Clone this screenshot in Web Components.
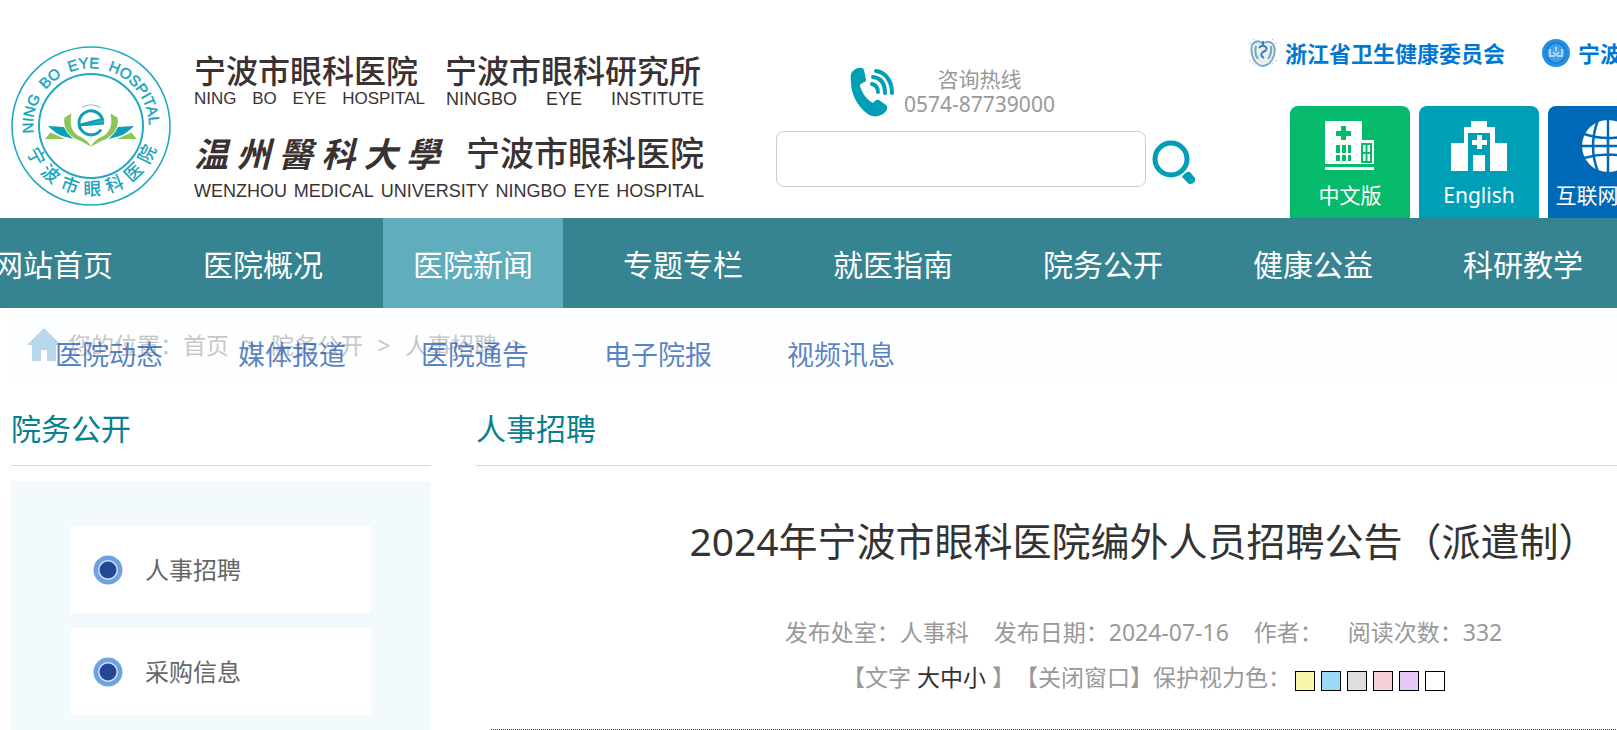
<!DOCTYPE html>
<html lang="zh-CN">
<head>
<meta charset="utf-8">
<title>宁波市眼科医院</title>
<style>
    html {
        overflow-x: hidden;
    }
    body {
        margin: 0;
        background: #fff;
        color: #333;
        font-family: "Noto Sans", "Noto Sans CJK SC", sans-serif;
        font-size: 23px;
        text-spacing-trim: space-all;
        overflow-x: hidden;
    }
    .top {
        display: flex;
        align-items: flex-start;
        min-width: 1800px;
        padding-left: 11px;
    }
    .wrap {
        min-width: 1800px;
        margin-left: 11px;
    }
    .columns {
        display: grid;
        grid-template-columns: 420px 1335px;
        column-gap: 45px;
        margin-top: 10px;
    }
</style>
</head>
<body>
    <header class="top">
        <site-brand></site-brand>
        <site-search></site-search>
        <site-links></site-links>
    </header>
    <site-nav active="2"></site-nav>
    <div class="wrap">
        <bread-crumb></bread-crumb>
        <div class="columns">
            <side-menu>
                <section-title slot="title">院务公开</section-title>
                <menu-item>人事招聘</menu-item>
                <menu-item>采购信息</menu-item>
            </side-menu>
            <main>
                <section-title>人事招聘</section-title>
                <news-article>
                    <span slot="title">2024年宁波市眼科医院编外人员招聘公告（派遣制）</span>
                </news-article>
            </main>
        </div>
    </div>

<script>
function define(name, html, setup) {
    var template = document.createElement('template');
    template.innerHTML = html;
    customElements.define(name, class extends HTMLElement {
        constructor() {
            super();
            this.attachShadow({mode: 'open'}).appendChild(template.content.cloneNode(true));
        }
        connectedCallback() {
            if (setup) {
                setup(this, this.shadowRoot);
            }
        }
    });
}

define('site-brand', `
    <style>
        :host {
            display: flex;
            flex: none;
            width: 693px;
            padding-top: 46px;
            color: #3a3232;
        }
        svg {
            flex: none;
            width: 160px;
            height: 160px;
            margin-right: 23px;
        }
        .names {
            flex: 1;
            padding-top: 7px;
        }
        .row {
            display: flex;
            justify-content: space-between;
            font-size: 32px;
            font-weight: 500;
            line-height: 36px;
            white-space: nowrap;
        }
        .first {
            justify-content: flex-start;
            gap: 27px;
        }
        .latin {
            font-family: "Liberation Sans", Arial, sans-serif;
            font-size: 17px;
            font-weight: 400;
            line-height: 20px;
        }
        .latin div {
            display: flex;
            justify-content: space-between;
        }
        .hospital {
            width: 231px;
        }
        .institute {
            width: 258px;
            font-size: 18px;
        }
        .second {
            margin-top: 24px;
            line-height: 40px;
        }
        .brush {
            display: flex;
            justify-content: space-between;
            width: 246px;
            font-family: "Noto Sans CJK TC", sans-serif;
            font-size: 34px;
            font-style: italic;
            font-weight: 700;
        }
        .wide {
            font-size: 34px;
        }
        .wenzhou {
            margin-top: 8px;
            font-size: 18px;
        }
    </style>
    <svg viewBox="0 0 160 160" role="img" aria-label="宁波市眼科医院">
        <defs>
            <path id="high" d="M22.4 87.1A58 58 0 1 1 137.1 90.1"/>
            <path id="low" d="M13.3 97.9A69 69 0 0 0 146.7 97.9"/>
        </defs>
        <g fill="none" stroke="#22a9c0">
            <circle cx="80" cy="80" r="79" stroke-width="1.6"/>
            <circle cx="80" cy="80" r="52" stroke-width="2"/>
        </g>
        <g fill="#1ba5bd" stroke="#1ba5bd" stroke-width=".5" font-family="Liberation Sans, Arial, sans-serif" font-size="15">
            <text><textPath href="#high" startOffset="0">NING</textPath></text>
            <text><textPath href="#high" startOffset="46">BO</textPath></text>
            <text><textPath href="#high" startOffset="76">EYE</textPath></text>
            <text><textPath href="#high" startOffset="115">HOSPITAL</textPath></text>
        </g>
        <g fill="#1ba5bd" font-family="Noto Sans CJK SC, sans-serif" font-size="18" font-weight="500" text-anchor="middle" id="seal"></g>
        <g id="leaf">
            <path fill="#8dc656" d="M53.5 71.6L60.5 67.6C58.5 78 60 84 66 89C73 92 78 96 80 100.5C74 98 71 95 65 93C56 88 52 81 53.5 71.6zM34 93L39.5 86.5L54 93z"/>
            <path fill="#0e9fb6" d="M37 80L53 81C56 87 58 89 62.5 93L55 91C49 90 43 86 37 80z"/>
        </g>
        <use href="#leaf" transform="matrix(-1 0 0 1 160 0)"/>
        <circle cx="80" cy="76.5" r="14.5" fill="#fff"/>
        <path fill="none" stroke="#0e9fb6" stroke-width="3" d="M67.5 79.5L91.5 73.5A12 12 0 1 0 90 83.5"/>
        <path fill="#0e9fb6" d="M68 80L93 75L93 78.5L76 80z"/>
        <path fill="none" stroke="#7ccbd8" stroke-width="1.2" d="M71 61.5Q80 56 89 61.5"/>
    </svg>
    <div class="names">
        <div class="row first"><span>宁波市眼科医院</span><span>宁波市眼科研究所</span></div>
        <div class="row latin">
            <div class="hospital"><span>NING</span><span>BO</span><span>EYE</span><span>HOSPITAL</span></div>
            <div class="institute"><span>NINGBO</span><span>EYE</span><span>INSTITUTE</span></div>
        </div>
        <div class="row second">
            <div class="brush"><span>温</span><span>州</span><span>醫</span><span>科</span><span>大</span><span>學</span></div>
            <span class="wide">宁波市眼科医院</span>
        </div>
        <div class="row latin wenzhou"><span>WENZHOU</span><span>MEDICAL</span><span>UNIVERSITY</span><span>NINGBO</span><span>EYE</span><span>HOSPITAL</span></div>
    </div>
`, function(host, sroot) {
    // lower half of the seal, one character every 25 units along the arc
    sroot.querySelector('#seal').innerHTML = '宁波市眼科医院'.split('').map(function(c, i) {
        return '<text><textPath href="#low" startOffset="' + (17 + i * 25) + '">' + c + '</textPath></text>';
    }).join('');
});

define('site-search', `
    <style>
        :host {
            display: block;
            flex: none;
            width: 422px;
            margin: 67px 50px 0 72px;
        }
        .hotline {
            display: flex;
            gap: 10px;
            height: 64px;
            padding-left: 74px;
            color: #999;
        }
        .hotline svg {
            width: 44px;
            height: 50px;
        }
        .hotline p {
            margin: 0;
            font-size: 21px;
            line-height: 25px;
            text-align: center;
        }
        .hotline span {
            display: block;
        }
        form {
            display: flex;
            align-items: center;
            gap: 5px;
        }
        input {
            box-sizing: border-box;
            width: 370px;
            height: 56px;
            padding: 0 12px;
            border: 1px solid #ccc;
            border-radius: 8px;
            background: #fff;
            font: inherit;
            outline: 0;
        }
        button {
            padding: 6px 0 0;
            border: 0;
            background: none;
            cursor: pointer;
        }
        button svg {
            display: block;
        }
    </style>
    <div class="hotline">
        <svg viewBox="0 0 44 50" fill="none" stroke="#009fb6" stroke-width="4" stroke-linecap="round">
            <path fill="#009fb6" stroke="none" d="M4 3C8 0 13 0 14 3L16 13C16 16 9 16 10 19C12 26 17 33 23 36C25 34 26 32 29 33L36 38C39 41 36 45 33 47C26 51 20 50 14 44C7 37 1 27 1 15C0 9 1 5 4 3z"/>
            <path d="M22 17C26 18 28 20 28 25M23 10C31 11 35 17 35 26M26 4C36 5 42 15 42 26"/>
        </svg>
        <p><span>咨询热线</span>0574-87739000</p>
    </div>
    <form>
        <input type="text" aria-label="搜索">
        <button type="button" aria-label="搜索">
            <svg width="46" height="46" viewBox="0 0 46 46">
                <circle cx="20" cy="20" r="16" fill="none" stroke="#009fb6" stroke-width="5"/>
                <path fill="#009fb6" d="M31 38Q35 32 39 33L44 39Q45 45 38 45z"/>
            </svg>
        </button>
    </form>
`);

define('site-links', `
    <style>
        :host {
            display: block;
            flex: none;
            padding-top: 38px;
        }
        .gov {
            display: flex;
            gap: 36px;
            height: 68px;
        }
        .gov a {
            display: flex;
            gap: 7px;
            height: 30px;
            color: #0078d2;
            font-size: 22px;
            font-weight: 700;
            line-height: 30px;
            text-decoration: none;
            white-space: nowrap;
        }
        .tiles {
            display: flex;
            gap: 9px;
            padding-left: 42px;
        }
        .tiles a {
            display: flex;
            flex-direction: column;
            align-items: center;
            width: 120px;
            height: 112px;
            border-radius: 8px 8px 0 0;
            color: #fff;
            font-size: 21px;
            line-height: 30px;
            text-decoration: none;
            white-space: nowrap;
        }
        .tiles svg {
            width: 60px;
            height: 60px;
            margin-top: 14px;
        }
        .cn { background: #06ba6c; }
        .en { background: #009fb8; }
        .net { background: #0069b7; }
    </style>
    <div class="gov">
        <a href="#">
            <svg width="30" height="30" viewBox="0 0 30 30" fill="none">
                <g stroke="#9db9dc" stroke-dasharray="2 3"><path d="M1 6L6 1M29 6L24 1M1 22L8 28M29 22L22 28"/></g>
                <path fill="#e4f0f4" stroke="#7fa9cc" stroke-width="2" d="M14 5Q8 1 4 7Q2 14 6 22Q10 28 15 28Q21 27 24 22Q29 13 25 6Q20 2 16 5z"/>
                <path stroke="#70aaa9" stroke-width="2" d="M8 8Q6 16 10 21M23 8Q24 16 20 21"/>
                <path stroke="#3f7db8" stroke-width="2" d="M15 3V8M11 10Q14 6 18 9Q20 12 15 14Q11 17 16 20"/>
            </svg>
            浙江省卫生健康委员会
        </a>
        <a href="#">
            <svg width="30" height="30" viewBox="0 0 30 30" fill="none">
                <circle cx="15" cy="15" r="14" fill="#2490e6"/>
                <circle cx="15" cy="15" r="10" fill="#439ee7" stroke="#1781d6" stroke-width="2"/>
                <path stroke="#a9d6fa" stroke-width="2" d="M9 11V18H14M15 9V13M21 11V18H16M12 14L15 17L18 14"/>
            </svg>
            宁波
        </a>
    </div>
    <div class="tiles">
        <a class="cn" href="#">
            <svg viewBox="0 0 60 60">
                <path fill="#fff" d="M5 1H42V20H54V44H5zM5 47H54V50H5z"/>
                <path fill="#06ba6c" d="M21 6H26V11H31V16H26V20H21V16H16V11H21zM16 25H20V33H16zM22 25H26V33H22zM28 25H31V33H28zM16 35H20V41H16zM22 35H26V41H22zM28 35H31V41H28z"/>
                <path fill="none" stroke="#06ba6c" stroke-width="2" d="M42 24H51V42H42zM46.5 24V42M42 33H51"/>
            </svg>
            中文版
        </a>
        <a class="en" href="#">
            <svg viewBox="0 0 60 60">
                <path fill="#fff" d="M2 23H15V7H22V1H38V7H46V23H58V51H41V13H19V51H2zM24 35H36V51H24zM28 15H33V20H38V25H33V29H28V25H23V20H28z"/>
            </svg>
            English
        </a>
        <a class="net" href="#">
            <svg viewBox="0 0 60 60">
                <circle cx="30" cy="26" r="26" fill="#fff"/>
                <path fill="none" stroke="#0069b7" stroke-width="2.5" d="M30 0V52M6 14Q30 22 54 14M4 26H56M6 38Q30 31 54 38M20 0Q10 26 20 52M40 0Q50 26 40 52"/>
            </svg>
            互联网医院
        </a>
    </div>
`);

define('site-nav', `
    <style>
        :host {
            display: block;
            position: relative;
            z-index: 1;
            background: #368391;
        }
        .main {
            display: flex;
            gap: 30px;
            margin-left: -37px;
        }
        .main a {
            flex: none;
            width: 180px;
            padding-top: 4px;
            color: #fff;
            font-size: 30px;
            line-height: 86px;
            text-align: center;
            text-decoration: none;
        }
        .main a.active {
            background: #60adbd;
        }
        /* the open submenu hangs over the breadcrumb */
        .sub {
            position: absolute;
            top: 100%;
            left: 0;
            right: 0;
            display: flex;
            gap: 75px;
            padding-left: 55px;
            background: rgba(255, 255, 255, .5);
        }
        .sub a {
            color: rgba(16, 76, 170, .7);
            font-size: 27px;
            line-height: 94px;
            text-decoration: none;
            white-space: nowrap;
        }
    </style>
    <nav class="main"></nav>
    <div class="sub">
        <a href="#">医院动态</a>
        <a href="#">媒体报道</a>
        <a href="#">医院通告</a>
        <a href="#">电子院报</a>
        <a href="#">视频讯息</a>
    </div>
`, function(host, sroot) {
    var items = ['网站首页', '医院概况', '医院新闻', '专题专栏', '就医指南', '院务公开', '健康公益', '科研教学'];
    var active = Number(host.getAttribute('active'));
    sroot.querySelector('.main').innerHTML = items.map(function(text, i) {
        return '<a href="#"' + (i === active ? ' class="active"' : '') + '>' + text + '</a>';
    }).join('');
});

define('bread-crumb', `
    <style>
        :host {
            display: flex;
            align-items: center;
            height: 74px;
            padding-left: 16px;
            background: #f9fcff;
            color: #8c8c8c;
            font-size: 23px;
            line-height: 30px;
            white-space: nowrap;
        }
        svg {
            width: 34px;
            height: 34px;
            margin-right: 7px;
        }
        a {
            color: inherit;
            text-decoration: none;
        }
        i {
            width: 42px;
            font-style: normal;
            text-align: center;
        }
    </style>
    <svg viewBox="0 0 34 34"><path fill="#72aed6" d="M17 0L34 17H29V33H20V22H14V33H5V17H0z"/></svg>
    <span>您的位置：</span>
    <a href="#">首页</a><i>&gt;</i>
    <a href="#">院务公开</a><i>&gt;</i>
    <a href="#">人事招聘</a><i>&gt;</i>
`);

define('section-title', `
    <style>
        :host {
            display: block;
            border-bottom: 1px solid #d9d9d9;
        }
        h2 {
            margin: 0;
            color: #088090;
            font-size: 30px;
            font-weight: 400;
            line-height: 73px;
        }
    </style>
    <h2><slot></slot></h2>
`);

define('side-menu', `
    <style>
        :host {
            display: block;
        }
        .panel {
            display: flex;
            flex-direction: column;
            gap: 15px;
            margin-top: 15px;
            padding: 45px 60px;
            background: #f2fafe;
        }
    </style>
    <slot name="title"></slot>
    <div class="panel"><slot></slot></div>
`);

define('menu-item', `
    <style>
        :host {
            display: block;
            background: #fff;
        }
        a {
            display: flex;
            align-items: center;
            gap: 22px;
            padding-left: 22px;
            color: #666;
            font-size: 24px;
            line-height: 87px;
            text-decoration: none;
        }
    </style>
    <a href="#">
        <svg width="30" height="30" viewBox="0 0 30 30">
            <circle cx="15" cy="15" r="14.5" fill="#6ea2e0"/>
            <circle cx="15" cy="15" r="10" fill="#d3e1f5"/>
            <circle cx="15" cy="15" r="8.5" fill="#264796"/>
        </svg>
        <slot></slot>
    </a>
`);

define('news-article', `
    <style>
        :host {
            display: block;
            margin: 45px 15px 0;
            padding-bottom: 29px;
            border-bottom: 1px dotted #333;
            color: #999;
            text-align: center;
        }
        h1 {
            margin: 0 0 39px;
            color: #333;
            font-size: 39px;
            font-weight: 400;
            line-height: 60px;
        }
        .meta,
        .tools {
            display: flex;
            align-items: center;
            justify-content: center;
            line-height: 45px;
            white-space: nowrap;
        }
        .meta {
            gap: 25px;
        }
        a {
            color: inherit;
            text-decoration: none;
        }
        .size {
            margin: 0 6px;
            color: #333;
        }
        .colors {
            display: flex;
            gap: 6px;
            padding: 6px 0 0 4px;
        }
        button {
            width: 20px;
            height: 20px;
            padding: 0;
            border: 1px solid #000;
        }
    </style>
    <h1><slot name="title"></slot></h1>
    <div class="meta">
        <span>发布处室：人事科</span>
        <span>发布日期：2024-07-16</span>
        <span>作者：</span>
        <span>阅读次数：332</span>
    </div>
    <div class="tools">
        <span>【文字</span>
        <span class="size"><a href="#">大</a><a href="#">中</a><a href="#">小</a></span>
        <span>】【<a href="#">关闭窗口</a>】保护视力色：</span>
        <div class="colors"></div>
    </div>
`, function(host, sroot) {
    var colors = ['#faf6ad', '#9bdaf4', '#dedede', '#f8d0d8', '#e4c8f8', '#ffffff'];
    sroot.querySelector('.colors').innerHTML = colors.map(function(c) {
        return '<button type="button" aria-label="' + c + '" style="background:' + c + '"></button>';
    }).join('');
});
</script>
</body>
</html>
